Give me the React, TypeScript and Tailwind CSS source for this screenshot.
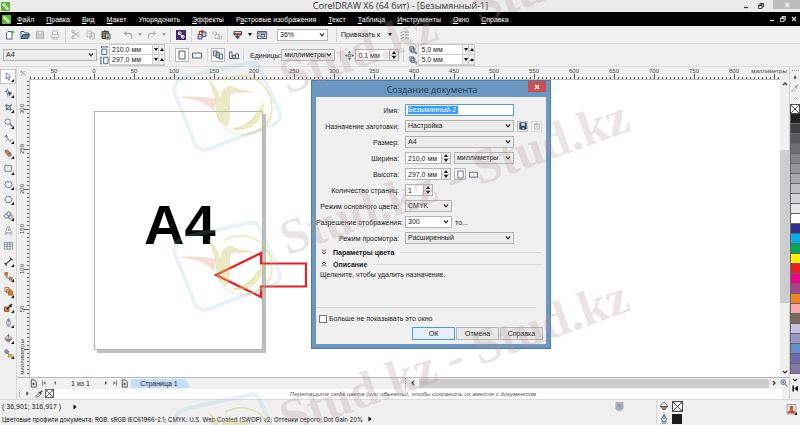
import type { ReactNode } from "react";

type IconProps = { children: ReactNode; box?: string; className?: string; color?: string };

function Icon({ children, box = "0 0 20 20", className = "size-[10px]", color = "#44546a" }: IconProps) {
  return (
    <svg viewBox={box} className={`shrink-0 ${className}`} fill="none" stroke={color} strokeWidth="1.8" aria-hidden="true">
      {children}
    </svg>
  );
}

function Caret({ dim = false }: { dim?: boolean }) {
  return (
    <svg viewBox="0 0 4 3" className="h-[3px] w-1 shrink-0" aria-hidden="true">
      <path d="M0 0h4L2 3z" fill={dim ? "#aaa" : "#111"} />
    </svg>
  );
}

function Separator() {
  return <div className="h-[14px] w-px shrink-0 bg-[#d4d4d4]" />;
}

/* ---------- shared form controls ---------- */

function Select({ id, value, label, className, white = false }: { id: string; value: string; label?: string; className: string; white?: boolean }) {
  return (
    <div className={`relative shrink-0 ${className}`}>
      <select
        id={id}
        aria-label={label}
        defaultValue={value}
        className={`block h-3 w-full appearance-none border border-[#b4b4b4] pl-0.5 text-[7px] leading-[10px] outline-none ${white ? "bg-white" : "bg-[#ececec]"}`}
      >
        <option>{value}</option>
      </select>
      <svg viewBox="0 0 6 4" className="pointer-events-none absolute top-1 right-[3px] h-1 w-[6px]" aria-hidden="true">
        <path d="M1 .5l2 2.4L5 .5" fill="none" stroke="#333" strokeWidth="1.2" />
      </svg>
    </div>
  );
}

function StackedSpin() {
  return (
    <div className="flex w-[9px] shrink-0 flex-col border-y border-r border-[#b4b4b4] bg-[#ececec]">
      <button aria-label="Больше" className="flex flex-1 items-center justify-center border-b border-[#c4c4c4]">
        <svg viewBox="0 0 4 3" className="h-[3px] w-[4px]"><path d="M2 0l2 3H0z" fill="#111" /></svg>
      </button>
      <button aria-label="Меньше" className="flex flex-1 items-center justify-center">
        <svg viewBox="0 0 4 3" className="h-[3px] w-[4px]"><path d="M0 0h4L2 3z" fill="#111" /></svg>
      </button>
    </div>
  );
}

function Spinner({ id, value, label, className }: { id: string; value: string; label?: string; className: string }) {
  return (
    <div className={`flex h-3 shrink-0 ${className}`}>
      <input id={id} aria-label={label} defaultValue={value} className="min-w-0 flex-1 border border-[#b4b4b4] bg-white pl-0.5 text-[7px] outline-none" />
      <StackedSpin />
    </div>
  );
}

function FlatSpinner({ label, value, className }: { label: string; value: string; className: string }) {
  return (
    <div className={`flex h-[10px] border-b border-[#cfcfcf] bg-white ${className}`}>
      <input aria-label={label} defaultValue={value} className="min-w-0 flex-1 pl-0.5 text-[7px] outline-none" />
      <button aria-label="Меньше" className="flex w-[6px] items-center justify-center border-l border-[#cfcfcf] bg-[#eee]">
        <svg viewBox="0 0 4 3" className="h-[3px] w-[4px]"><path d="M0 0h4L2 3z" fill="#111" /></svg>
      </button>
      <button aria-label="Больше" className="flex w-[6px] items-center justify-center border-l border-[#cfcfcf] bg-[#eee]">
        <svg viewBox="0 0 4 3" className="h-[3px] w-[4px]"><path d="M2 0l2 3H0z" fill="#111" /></svg>
      </button>
    </div>
  );
}

/* ---------- window chrome ---------- */

function Logo() {
  return (
    <svg viewBox="0 0 20 20" className="size-[9px] shrink-0" aria-hidden="true">
      <path d="M0 0h20v20H0z" fill="#5cb531" />
      <path d="M3 4l4-1 9 9 1 5-5-1-9-9z" fill="#fff" />
      <path d="M4 5l10 9M6 4l9 9" stroke="#5cb531" strokeWidth="1" />
    </svg>
  );
}

function WindowButtons({ color }: { color: string }) {
  return (
    <>
      <button aria-label="Свернуть"><Icon className="size-[6px]" color={color} box="0 0 12 12"><path d="M2 9h8" strokeWidth="2.5" /></Icon></button>
      <button aria-label="Восстановить"><Icon className="size-[6px]" color={color} box="0 0 12 12"><path d="M1 4h7v7H1zM4 4V1h7v7H8M1 5h7M4 2h7" /></Icon></button>
    </>
  );
}

function TitleBar() {
  return (
    <header className="flex h-3 items-center bg-[#ebebeb] pl-px">
      <Logo />
      <h1 className="flex-1 pl-[48px] text-center font-['Open_Sans',sans-serif] text-[9px] leading-3 text-[#333]">CorelDRAW X6 (64 бит) - [Безымянный-1]</h1>
      <div className="flex h-full items-center gap-[9px]">
        <WindowButtons color="#333" />
        <button aria-label="Закрыть" className="flex h-[9px] w-[27px] items-center justify-center self-start bg-[#bcbcbc]">
          <Icon className="size-[6px]" color="#fff" box="0 0 12 12"><path d="M2 2l8 8M10 2l-8 8" strokeWidth="2.4" /></Icon>
        </button>
      </div>
    </header>
  );
}

const menus: [string, string, string][] = [
  ["", "Ф", "айл"],
  ["", "П", "равка"],
  ["", "В", "ид"],
  ["", "М", "акет"],
  ["Упоря", "д", "очить"],
  ["", "Э", "ффекты"],
  ["Р", "а", "стровые изображения"],
  ["", "Т", "екст"],
  ["", "Т", "аблица"],
  ["", "И", "нструменты"],
  ["", "О", "кно"],
  ["", "С", "правка"],
];

function MenuBar() {
  return (
    <nav className="flex h-[14px] items-center bg-black pr-[3px] pl-[2px] text-white">
      <Logo />
      <div className="flex flex-1 gap-3 pl-[6px]">
        {menus.map(([a, u, b]) => (
          <button key={a + u + b} className="whitespace-nowrap">{a}<u>{u}</u>{b}</button>
        ))}
      </div>
      <div className="flex items-center gap-[5px]">
        <WindowButtons color="#ddd" />
        <button aria-label="Закрыть документ"><Icon className="size-[6px]" color="#ddd" box="0 0 12 12"><path d="M2 2l8 8M10 2l-8 8" strokeWidth="2.4" /></Icon></button>
      </div>
    </nav>
  );
}

function Tool({ label, children, className = "" }: { label: string; children: ReactNode; className?: string }) {
  return <button aria-label={label} className={`flex shrink-0 items-center justify-center ${className}`}>{children}</button>;
}

function StandardBar() {
  return (
    <div className="flex h-[18px] items-center border-b border-[#dcdcdc] pl-[5px]">
      <div className="flex items-center gap-[5px]">
        <Tool label="Создать"><Icon><path d="M3 6l3-3h8v15H3z" fill="#fff" /><path d="M15 1v7M11 4h8" stroke="#53ab3c" strokeWidth="2.5" /></Icon></Tool>
        <Tool label="Открыть"><Icon color="#26405f"><path d="M2 17V3h6l2 3h7v3" /><path d="M2 17l4-8h13l-3 8z" fill="#5f7ea6" /></Icon></Tool>
        <Tool label="Сохранить"><Icon color="#b4b4b4"><path d="M3 3h14v14H3zM6 3v6h8V3M6 17v-5h8v5" strokeWidth="2.2" /></Icon></Tool>
        <Tool label="Печать"><Icon color="#b8b8b8"><path d="M5 9V2h10v7M2 9h16v6H2zM4 18h12" /></Icon></Tool>
      </div>
      <div className="flex items-center gap-[5px] pl-[5px]">
        <Separator />
        <Tool label="Вырезать"><Icon color="#a6a6a6"><path d="M2 4l15 9M2 13l15-9" /><circle cx="4" cy="3" r="2.5" /><circle cx="4" cy="15" r="2.5" /></Icon></Tool>
        <Tool label="Копировать"><Icon color="#b4b4b4"><path d="M2 2h9v12H2zM8 6h9v12H8zM10 10h5M10 14h5" /></Icon></Tool>
        <Tool label="Вставить"><Icon color="#3b3b3b"><path d="M2 3h13v14H2z" fill="#837d5e" /><path d="M9 8h9v10H9z" fill="#fff" /><path d="M6 2h5M11 12h5M11 15h5" strokeWidth="2.4" /></Icon></Tool>
      </div>
      <div className="flex items-center gap-[5px] pl-3">
        <Tool label="Отменить"><Icon color="#a9b0b8"><path d="M7 3L3 7l4 4M3 7h9q5 0 5 5v5" strokeWidth="2.6" /></Icon></Tool>
        <Caret dim />
        <Tool label="Повторить"><Icon color="#b9bec4"><path d="M13 3l4 4-4 4M17 7H8q-5 0-5 5v5" strokeWidth="2.6" /></Icon></Tool>
        <Caret dim />
      </div>
      <div className="flex items-center gap-[5px] pl-1">
        <Separator />
        <Tool label="Corel CONNECT"><Icon color="#fff"><path d="M0 0h20v20H0z" fill="#46246b" stroke="none" /><path d="M4 5l12 11M5 4h5v5H5zM11 11h5v5h-5z" /></Icon></Tool>
        <Separator />
        <Tool label="Импорт"><Icon><path d="M2 9h8v9H2zM10 4h8v9h-8z" fill="#b9c4d3" /><path d="M5 9V3h7M9 0l4 3-4 3" stroke="#bd2b20" strokeWidth="2.2" /></Icon></Tool>
        <Tool label="Экспорт"><Icon color="#b4b4b4"><path d="M2 9V4h7v5M6 9h8v8H6zM14 12h5v6h-5z" /></Icon></Tool>
        <Separator />
        <Tool label="Опубликовать"><Icon><path d="M2 3h15v7H2z" fill="#c9453a" /><path d="M4 5h11" stroke="#fff" /><path d="M9 10v4M5 13l4 5 4-5z" fill="#44546a" /></Icon></Tool>
        <Caret />
        <Tool label="Экран приветствия"><Icon><path d="M1 3h18v14H1z" fill="#d8deea" /><path d="M1 6h18M8 9h7v5H8zM4 9v5" /></Icon></Tool>
      </div>
      <div className="flex items-center gap-2 pl-[10px]">
        <Select id="zoom" label="Масштаб" value="36%" className="w-[51px]" white />
        <Separator />
        <button className="-ml-1 whitespace-nowrap">Привязать к</button>
        <Caret />
        <Tool label="Параметры"><Icon color="#7e8c82"><path d="M1 4l2 2 4-4M1 10l2 2 4-4M1 16l2 2 4-4" stroke="#5f9c68" /><path d="M10 4h8M10 10h8M10 16h8" /></Icon></Tool>
      </div>
    </div>
  );
}

function PropertyBar() {
  return (
    <div className="flex h-[23px] items-center border-b border-[#dcdcdc] pl-[3px]">
      <Select id="paper" label="Размер страницы" value="A4" className="w-[94px]" />
      <div className="flex flex-col gap-px pl-[3px]">
        <Icon className="size-[9px]"><path d="M4 7h11v12H4zM3 2h13M3 0v4M16 0v4" /></Icon>
        <Icon className="size-[9px]"><path d="M8 3h10v14H8zM2 3v14M0 3h4M0 17h4" /></Icon>
      </div>
      <div className="flex w-[56px] flex-col border border-[#c8c8c8]">
        <FlatSpinner label="Ширина страницы" value="210,0 мм" className="w-full" />
        <FlatSpinner label="Высота страницы" value="297,0 мм" className="w-full" />
      </div>
      <div className="flex items-center gap-[5px] pl-1">
        <Separator />
        <div className="flex items-center gap-[3px]">
          <Tool label="Книжная" className="size-[14px] border border-[#b9b9b9] bg-white"><Icon><path d="M4 2h12v16H4z" fill="#f2f4f8" /></Icon></Tool>
          <Tool label="Альбомная"><Icon><path d="M1 6h18v10H1z" fill="#f2f4f8" /></Icon></Tool>
        </div>
        <Separator />
        <div className="-ml-0.5 flex items-center gap-1">
          <Tool label="Все страницы" className="size-[14px] border border-[#b9b9b9] bg-white"><Icon><path d="M1 2h7v10H1zM6 5h7v10H6zM12 8h7v10h-7z" fill="#f2f4f8" /></Icon></Tool>
          <Tool label="Текущая страница"><Icon><path d="M1 4h5v13H1zM7 11h5v6H7zM13 8h6v9h-6z" fill="#f2f4f8" /></Icon></Tool>
        </div>
      </div>
      <div className="flex items-center gap-[6px] pl-1">
        <Separator />
        <label htmlFor="units">Единицы:</label>
      </div>
      <Select id="units" value="миллиметры" className="w-[54px]" />
      <div className="flex items-center gap-1 pl-[5px]">
        <Separator />
        <div className="flex items-center gap-px">
          <Icon className="size-[9px]"><path d="M7 7h6v6H7z" /><path d="M10 0l3 4H7zM10 20l3-4H7zM0 10l4-3v6zM20 10l-4-3v6z" fill="#333" stroke="none" /></Icon>
          <Spinner id="nudge" label="Шаг перемещения" value="0,1 мм" className="w-[44px]" />
        </div>
        <Separator />
      </div>
      <div className="flex flex-col gap-px pl-[5px]">
        <Icon className="size-[9px]"><path d="M2 2h8v9H2zM5 5h8v9H5z" fill="#dfe4ec" /><path d="M13 13l5 5M18 13l-5 5" /></Icon>
        <Icon className="size-[9px]"><path d="M2 2h8v9H2zM5 5h8v9H5z" fill="#dfe4ec" /><path d="M13 12l3 3 3-3M16 15v4" /></Icon>
      </div>
      <div className="flex w-[57px] flex-col border border-[#c8c8c8]">
        <FlatSpinner label="Смещение X" value="5,0 мм" className="w-full" />
        <FlatSpinner label="Смещение Y" value="5,0 мм" className="w-full" />
      </div>
    </div>
  );
}

/* ---------- tool box ---------- */

const tools: { name: string; flyout: boolean; art: ReactNode }[] = [
  { name: "Указатель", flyout: true, art: <path d="M6 2l9 9-5 .5 3 6-2.5 1-3-6L4 15z" fill="#fff" /> },
  { name: "Форма", flyout: true, art: <><path d="M8 1Q3 8 9 19M2 8l6-2" /><path d="M9 8l8 3-5 6z" fill="#26354a" /></> },
  { name: "Обрезка", flyout: true, art: <><path d="M6 2v12h13M2 6h12v12M18 2L4 16" strokeWidth="2.2" /></> },
  { name: "Масштаб", flyout: true, art: <><circle cx="8" cy="8" r="6" fill="#eef3f8" /><path d="M13 13l6 6" strokeWidth="3" /></> },
  { name: "Свободная форма", flyout: true, art: <path d="M5 1v8M1 5h8M5 15q4-8 6-2t4 2l4-4" /> },
  { name: "Интеллектуальная заливка", flyout: true, art: <><path d="M3 3l5-1 9 11-5 5L3 8z" fill="#d98547" /><path d="M2 2l4 4M8 13l7-5" stroke="#444" /></> },
  { name: "Прямоугольник", flyout: true, art: <path d="M2 3h15v13H2z" fill="#eef1f7" /> },
  { name: "Эллипс", flyout: true, art: <ellipse cx="10" cy="10" rx="8" ry="7" fill="#eef1f7" /> },
  { name: "Многоугольник", flyout: true, art: <path d="M6 3h8l4 7-4 7H6l-4-7z" fill="#eef1f7" /> },
  { name: "Основные фигуры", flyout: true, art: <><circle cx="6" cy="11" r="5" fill="#eef1f7" /><path d="M9 1l7 4-4 8-6-4zM11 9h7v8h-7z" fill="#eef1f7" /></> },
  { name: "Текст", flyout: false, art: <path d="M8 2h4l6 16h-5l-1-4H8l-1 4H2zM9 10h2l-1-4z" fill="#fff" strokeWidth="1.3" /> },
  { name: "Таблица", flyout: false, art: <path d="M1 3h18v15H1zM1 7h18M1 12h18M7 3v15M13 3v15" fill="#eef1f7" strokeWidth="1.3" /> },
  { name: "Размер", flyout: true, art: <path d="M3 17L17 4M1 13l5 6M13 2l6 5" stroke="#333" strokeWidth="2.4" /> },
  { name: "Соединительная линия", flyout: true, art: <><path d="M5 5v7l10 3" /><path d="M2 1h6v6H2zM12 12h6v6h-6z" fill="#d9823b" stroke="#a8622c" /></> },
  { name: "Перетекание", flyout: true, art: <><path d="M2 1h9v9H2z" fill="#f7ead2" stroke="#a8622c" /><path d="M6 5h9v8H6z" fill="#eeb469" stroke="#a8622c" /><path d="M10 9h9v9h-9z" fill="#e07d22" stroke="#a8622c" /></> },
  { name: "Пипетка", flyout: true, art: <><path d="M1 9h10v10H1z" fill="#dc7626" stroke="#8f4a17" /><path d="M6 14l8-8M12 4l5 5M14 6l4-4" stroke="#26354a" strokeWidth="3" /></> },
  { name: "Абрис", flyout: true, art: <path d="M10 1l5 9-2 5H7l-2-5zM10 3v7M6 18h8" fill="#eef1f7" /> },
  { name: "Заливка", flyout: true, art: <><path d="M2 10l8-8 8 8-8 8z" fill="#eef1f7" /><path d="M3 11h14l-7 7z" fill="#dc7626" /><path d="M10 9V0" /></> },
  { name: "Интерактивная заливка", flyout: true, art: <><path d="M1 6l5-5 5 5-5 5z" fill="#8a94a3" /><path d="M10 12h8v6h-8z" fill="#f0b04a" stroke="#c98a34" /><path d="M8 9l4 4" /></> },
];

function ToolBox() {
  return (
    <aside className="w-[17px] shrink-0 border-r border-[#d8d8d8] pt-0.5">
      <div className="flex h-[292px] flex-col">
        {tools.map((t, i) => (
          <button key={t.name} aria-label={t.name} className={`relative flex flex-1 items-center pl-[3px] ${i === 0 ? "border border-[#c4c4c4] bg-white" : "border border-transparent"}`}>
            <Icon className="size-[9px]" color="#5d6b80">{t.art}</Icon>
            {t.flyout && (
              <svg viewBox="0 0 3 3" className="absolute right-px bottom-px size-[3px]"><path d="M3 0v3H0z" fill="#000" /></svg>
            )}
          </button>
        ))}
      </div>
    </aside>
  );
}

/* ---------- rulers ---------- */

const topLabels = ["50", "0", "50", "100", "150", "200", "250", "300", "350", "400", "450", "500", "550", "600", "650", "700", "750", "800"];

function TopRuler() {
  return (
    <div className="flex h-3">
      <div className="flex w-3 shrink-0 items-center justify-center">
        <Icon className="size-[7px]" color="#666"><path d="M5 0v20M0 5h20" strokeDasharray="2 2" /><path d="M5 5l11 11" /></Icon>
      </div>
      <svg className="h-3 min-w-0 flex-1" role="img" aria-label="Горизонтальная линейка">
        <g stroke="#555" shapeRendering="crispEdges">
          {Array.from({ length: 188 }, (_, i) => (
            <line key={i} x1={i * 4 + 1.5} x2={i * 4 + 1.5} y1={i % 10 === 6 ? 7 : 10} y2="12" />
          ))}
        </g>
        <g fill="#444" className="text-[6px]" textAnchor="middle">
          {topLabels.map((t, i) => <text key={i} x={25 + i * 40} y="6">{t}</text>)}
          <text x="740" y="6">миллиметры</text>
        </g>
      </svg>
    </div>
  );
}

const sideLabels = ["300", "250", "200", "150", "100", "50"];

function SideRuler() {
  return (
    <svg className="h-full w-3 shrink-0" role="img" aria-label="Вертикальная линейка">
      <g stroke="#555" shapeRendering="crispEdges">
        {Array.from({ length: 76 }, (_, i) => (
          <line key={i} y1={i * 4 + 2.5} y2={i * 4 + 2.5} x1={i % 10 === 7 ? 7 : 10} x2="12" />
        ))}
      </g>
      <g fill="#444" className="text-[6px]" textAnchor="middle">
        {sideLabels.map((t, i) => <text key={t} transform={`translate(7 ${30 + i * 40}) rotate(-90)`}>{t}</text>)}
        <text transform="translate(7 278) rotate(-90)">миллиметры</text>
      </g>
    </svg>
  );
}

/* ---------- dialog ---------- */

function Row({ label, id, children }: { label: string; id: string; children: ReactNode }) {
  return (
    <div className="flex h-4 items-center gap-[6px]">
      <label htmlFor={id} className="w-[83px] text-right whitespace-nowrap">{label}</label>
      <div className="flex items-center gap-[3px]">{children}</div>
    </div>
  );
}

function Section({ title, open }: { title: string; open: boolean }) {
  return (
    <div className="flex h-3 items-center gap-[6px] pr-1 pl-[5px]">
      <Icon className="size-[6px]" color="#333" box="0 0 12 12">{open ? <path d="M2 6l4-4 4 4M2 11l4-4 4 4" /> : <path d="M2 1l4 4 4-4M2 6l4 4 4-4" />}</Icon>
      <button className="font-bold">{title}</button>
      <div className="h-px flex-1 bg-[#dadada]" />
    </div>
  );
}

function Dialog() {
  return (
    <section role="dialog" aria-labelledby="dlg" className="absolute top-0 left-[281px] w-[240px] border border-[#4d7ba8] bg-[#6b98c3] px-1 pb-1">
      <div className="flex h-4 items-center">
        <h2 id="dlg" className="flex-1 pl-5 text-center font-['Open_Sans',sans-serif] text-[9px] text-[#26384c]">Создание документа</h2>
        <button aria-label="Закрыть диалог" className="flex h-[11px] w-[18px] items-center justify-center self-start bg-[#c8504f]">
          <Icon className="size-[6px]" color="#fff" box="0 0 12 12"><path d="M2 2l8 8M10 2l-8 8" strokeWidth="2.4" /></Icon>
        </button>
      </div>
      <div className="bg-[#f0f0f0] pt-[5px] pb-1">
        <Row id="name" label="Имя:">
          <div className="flex h-3 w-[109px] items-center border border-[#569de5] bg-white pl-0.5">
            <input id="name" defaultValue="Безымянный-2" className="h-2 w-[50px] bg-[#3399ff] text-[7px] leading-[8px] text-white outline-none" />
          </div>
        </Row>
        <Row id="preset" label="Назначение заготовки:">
          <Select id="preset" value="Настройка" className="w-[109px]" />
          <Tool label="Сохранить заготовку" className="size-[11px] border border-[#c4c4c4]"><Icon className="size-[8px]" color="#26354a"><path d="M2 2h16v16H2z" fill="#3b5680" /><path d="M6 3h8v6H6z" fill="#fff" stroke="none" /><path d="M7 18v-5h7v5" fill="#aebbd0" /></Icon></Tool>
          <Tool label="Удалить заготовку" className="size-[11px] border border-[#dedede]"><Icon className="size-[8px]" color="#b4b4b4"><path d="M4 6h12v12H4zM2 5h16M8 2h4M8 8v8M12 8v8" /></Icon></Tool>
        </Row>
        <Row id="size" label="Размер:"><Select id="size" value="A4" className="w-[109px]" /></Row>
        <Row id="w" label="Ширина:">
          <Spinner id="w" value="210,0 мм" className="w-[46px]" />
          <Select id="wu" label="Единицы ширины" value="миллиметры" className="w-[60px]" />
        </Row>
        <Row id="h" label="Высота:">
          <Spinner id="h" value="297,0 мм" className="w-[46px]" />
          <Tool label="Книжная ориентация" className="size-[12px] border border-[#b9b9b9] bg-white"><Icon className="size-[9px]"><path d="M4 2h12v16H4z" /></Icon></Tool>
          <Tool label="Альбомная ориентация"><Icon className="size-[9px]"><path d="M1 5h18v11H1z" /></Icon></Tool>
        </Row>
        <Row id="pages" label="Количество страниц:"><Spinner id="pages" value="1" className="w-[28px]" /></Row>
        <Row id="mode" label="Режим основного цвета:"><Select id="mode" value="CMYK" className="w-[47px]" /></Row>
        <Row id="dpi" label="Разрешение отображения:">
          <Select id="dpi" value="300" className="w-[47px]" white />
          <span>то...</span>
        </Row>
        <Row id="view" label="Режим просмотра:"><Select id="view" value="Расширенный" className="w-[109px]" /></Row>
        <Section title="Параметры цвета" open={false} />
        <Section title="Описание" open />
        <p className="h-[37px] pl-1">Щелкните, чтобы удалить назначение.</p>
        <hr className="mr-[10px] ml-px border-[#d6d6d6]" />
        <label className="mt-[6px] ml-[3px] flex h-[9px] items-center gap-0.5">
          <input type="checkbox" className="size-2 appearance-none border border-[#777] bg-white" />
          Больше не показывать это окно
        </label>
        <div className="mt-1 flex justify-end gap-px pr-[3px]">
          <button className="h-[13px] w-[43px] border border-[#4a9be0] bg-[#e6eef6]">ОК</button>
          <button className="h-[13px] w-[43px] border border-[#b4b4b4] bg-[#e8e8e8]">Отмена</button>
          <button className="h-[13px] w-[43px] border border-[#b4b4b4] bg-[#e8e8e8]">Справка</button>
        </div>
      </div>
    </section>
  );
}

/* ---------- drawing area ---------- */

function Canvas() {
  return (
    <main className="relative min-w-0 flex-1 overflow-hidden border-t border-l border-[#bdbdbd] bg-white">
      <div className="absolute top-[31px] left-[64px] h-[239px] w-[169px] border border-[#b5b5b5] bg-white shadow-[3px_3px_0_#bfbfbf]">
        <p className="pt-[81px] pl-[49px] text-[56px] leading-[64px] font-bold text-black">A4</p>
      </div>
      <svg viewBox="0 0 94 50" className="absolute top-[170px] left-[183px] h-[50px] w-[94px]" aria-hidden="true">
        <path d="M3 25L48 3v10.500h45v23H48V47z" fill="none" stroke="#ea1c24" strokeWidth="2.200" />
      </svg>
      <Dialog />
    </main>
  );
}

function Chevron({ d, label, className = "" }: { d: string; label: string; className?: string }) {
  return (
    <button aria-label={label} className={`flex shrink-0 items-center justify-center ${className}`}>
      <Icon className="size-[6px]" color="#333" box="0 0 12 12"><path d={d} strokeWidth="2.4" /></Icon>
    </button>
  );
}

function VerticalScroll() {
  return (
    <div className="flex w-[9px] shrink-0 flex-col bg-[#f0f0f0]">
      <Chevron label="Вверх" d="M2 8l4-4 4 4" className="h-[10px]" />
      <div className="h-[61px]" />
      <div className="h-[153px] bg-[#cdcdcd]" />
      <div className="flex-1" />
      <Chevron label="Вниз" d="M2 4l4 4 4-4" className="h-[10px]" />
    </div>
  );
}

function PageNav() {
  const page = <path d="M5 2h7l4 4v12H5zM7 11h6M10 8v6" />;
  return (
    <div className="flex h-[11px] items-center border-t border-[#b8b8b8] pl-3">
      <div className="flex items-center">
        <Tool label="Добавить страницу в начало"><Icon color="#333" className="size-[9px]">{page}</Icon></Tool>
        <Tool label="Первая" className="w-3"><Icon className="size-[6px]" box="0 0 12 12" color="#666"><path d="M3 1v10" /><path d="M9 2v8L5 6z" fill="#666" stroke="none" /></Icon></Tool>
        <Tool label="Предыдущая" className="w-[10px]"><Icon className="size-[6px]" box="0 0 12 12"><path d="M8 2v8L4 6z" fill="#666" stroke="none" /></Icon></Tool>
        <span className="w-[41px] text-center text-[7px]">1 из 1</span>
        <Tool label="Следующая" className="w-[9px]"><Icon className="size-[6px]" box="0 0 12 12"><path d="M4 2v8l4-4z" fill="#444" stroke="none" /></Icon></Tool>
        <Tool label="Последняя" className="w-[10px]"><Icon className="size-[6px]" box="0 0 12 12" color="#666"><path d="M9 1v10" /><path d="M3 2v8l4-4z" fill="#666" stroke="none" /></Icon></Tool>
        <Tool label="Добавить страницу в конец"><Icon color="#333" className="size-[9px]">{page}</Icon></Tool>
      </div>
      <button className="ml-0.5 h-[9px] w-[58px] rounded-tr-[7px] bg-[#c5def8] pr-[2px] text-[7px] leading-[9px]">Страница 1</button>
      <div className="ml-[216px] h-[10px] border-l border-dotted border-[#999]" />
      <Chevron label="Влево" d="M8 2L4 6l4 4" className="w-[13px]" />
      <div className="h-[9px] flex-1 bg-[#cdcdcd]" />
      <Chevron label="Вправо" d="M4 2l4 4-4 4" className="w-[10px]" />
      <Tool label="Навигатор" className="w-[10px]"><Icon className="size-[8px]"><circle cx="8" cy="8" r="6" fill="#dfe6ef" /><path d="M12 12l7 7M5 8h6M8 5v6" /></Icon></Tool>
    </div>
  );
}

function NoColor({ className }: { className: string }) {
  return (
    <svg viewBox="0 0 20 20" className={`shrink-0 ${className}`} aria-hidden="true">
      <path d="M1 1h18v18H1zM1 1l18 18M19 1L1 19" fill="#fff" stroke="#222" strokeWidth="1.6" />
    </svg>
  );
}

function Eyedropper({ color }: { color: string }) {
  return <Icon className="size-2" color={color}><path d="M2 18l2-5 7-7 4 4-7 7z" /><path d="M10 5l5 5M13 7l5-5" strokeWidth="4" /></Icon>;
}

function DocumentPalette() {
  return (
    <div className="flex h-[11px] items-center">
      <div className="ml-0.5 h-[7px] w-px border-l border-dotted border-[#999]" />
      <button aria-label="Меню палитры" className="flex w-[15px] justify-center"><Icon className="size-[5px]" box="0 0 10 10"><path d="M3 1v8l4-4z" fill="#000" stroke="none" /></Icon></button>
      <button aria-label="Образец" className="mr-0.5"><Eyedropper color="#33415a" /></button>
      <NoColor className="size-[9px]" />
      <div className="h-[10px] flex-1 bg-white pr-[10px] text-center text-[6px] leading-[10px] text-[#555] italic">
        Перетащите сюда цвета (или объекты), чтобы сохранить их вместе с документом
      </div>
      <div className="w-[7px]" />
    </div>
  );
}

const swatches = [
  "#232323", "#414042", "#58595b", "#6d6e71", "#808285", "#939598", "#a7a9ac", "#bcbec0", "#d1d3d4", "#e6e7e8", "#ffffff", "#2e3192", "#00aeef",
  "#00a651", "#fff200", "#ed1c24", "#ec008c", "#a3478a", "#f58220", "#f8a8ab", "#7d6a5f", "#c5c3e0", "#9a94c8", "#6590cb", "#6f6bb0", "#8278a9",
];

function ColorPalette() {
  return (
    <aside className="flex w-[11px] shrink-0 flex-col items-center border-l border-[#d0d0d0] pt-[3px]">
      <div className="h-px w-[7px] border-t border-dotted border-[#999]" />
      <button aria-label="Меню цветов" className="flex h-3 items-center"><Icon className="size-[5px]" box="0 0 10 10"><path d="M3 1v8l4-4z" fill="#000" stroke="none" /></Icon></button>
      <button aria-label="Пипетка цвета" className="flex h-[10px] items-center"><Eyedropper color="#aaa" /></button>
      <button aria-label="Цвета вверх" className="flex h-[11px] items-center"><Icon className="size-[5px]" color="#999" box="0 0 10 10"><path d="M1 7l4-4 4 4" /></Icon></button>
      <NoColor className="size-[10px]" />
      {swatches.map((c) => (
        <button key={c} aria-label={c} className="h-[10px] w-full border-b border-l border-[#666]" style={{ backgroundColor: c }} />
      ))}
      <Chevron label="Цвета вниз" d="M2 4l4 4 4-4" className="h-[11px]" />
      <Tool label="Развернуть палитру"><Icon className="size-[7px]" box="0 0 12 12" color="#000"><path d="M2 1v10" strokeWidth="2.5" /><path d="M10 1v10L4 6z" fill="#000" stroke="none" /></Icon></Tool>
    </aside>
  );
}

function StatusBar() {
  return (
    <footer className="flex h-[26px] border-t border-[#dadada] pl-0.5 font-[Inter,'Noto_Sans',sans-serif] text-[6px] text-[#111]">
      <div className="flex flex-1 flex-col whitespace-nowrap">
        <div className="flex h-[13px] items-center gap-[11px] font-['Liberation_Sans',sans-serif] text-[7px]">( 36,901; 316,917 ) <Icon className="size-[6px]" box="0 0 12 12"><path d="M3 1v10l6-5z" fill="#000" stroke="none" /></Icon></div>
        <div className="flex h-3 items-center gap-1">
          Цветовые профили документа: RGB: sRGB IEC61966-2.1; CMYK: U.S. Web Coated (SWOP) v2; Оттенки серого: Dot Gain 20%
          <Icon className="size-[6px]" box="0 0 12 12"><path d="M3 1v10l6-5z" fill="#000" stroke="none" /></Icon>
        </div>
      </div>
      <div className="flex gap-[32px] pt-px">
        <svg viewBox="0 0 20 20" className="mt-px size-[9px]" aria-hidden="true">
          <path d="M2 1h16v14l-4 4H6l-4-4z" fill="#aeb3c4" stroke="#85899a" /><circle cx="8" cy="8" r="4" fill="#c4817f" opacity=".6" /><circle cx="12" cy="8" r="4" fill="#7f9dc4" opacity=".6" /><circle cx="10" cy="12" r="4" fill="#7db190" opacity=".6" />
        </svg>
        <div className="mr-[103px] grid grid-cols-[10px_11px] gap-x-[3px] gap-y-px border-l border-[#d4d4d4] pl-0.5">
          <Icon className="size-[10px]"><path d="M2 10l8-8 8 8-8 8z" fill="#fff" /><path d="M3 11h14l-7 7z" fill="#dc7626" /></Icon>
          <NoColor className="size-[11px]" />
          <Icon className="size-[10px]"><path d="M10 1l5 9-2 5H7l-2-5zM10 3v7M6 18h8" fill="#eef1f7" /></Icon>
          <div className="size-[10px] bg-[#1d1d1d]" />
        </div>
      </div>
      <div className="flex w-[14px] items-start pt-1">
        <Icon className="size-[11px]" color="#999"><path d="M2 1h16v17H2z" fill="#f4f4f4" /><path d="M10 3a3.500 3.500 0 013 5l-1 3 5 3v3H3v-3l5-3-1-3a3.500 3.500 0 013-5z" fill="#d3472c" stroke="none" /><path d="M20 15v5h-5z" fill="#000" stroke="none" /></Icon>
      </div>
    </footer>
  );
}

/* ---------- translucent site marks over the window ---------- */

function Hummingbird() {
  return (
    <svg viewBox="0 0 130 105" className="h-[105px] w-[130px]" fill="none" aria-hidden="true">
      <path d="M24 21L84 8q8-2 11 6l19 42q3 10-6 14L43 94q-10 3-14-7L10 39Q7 25 24 21z" stroke="#8fbfca" strokeOpacity=".2" strokeWidth="4" />
      <path d="M60 25q20-10 36 3 14 14 10 32-6 16-24 19" stroke="#c3d35a" strokeOpacity=".45" strokeWidth="1.500" />
      <path d="M52 60q5 19 26 20 20 0 29-18" stroke="#e89a9a" strokeOpacity=".35" />
      <path d="M96 50q-2 20-28 24 26 2 31-26M93 56q-6 12-18 17" stroke="#cfcb55" strokeOpacity=".5" strokeWidth="1.500" />
      <path d="M43 24q10 8 12 19 2-12 11-12 5 3 25 6-15 1-24 1-3 5-2 9 1 15-3 25-12-7-11-19-1-14-8-29z" fill="#cfc76f" fillOpacity=".4" />
      <path d="M12 42q20-2 39 2l-2 13q-8-12-37-15z" fill="#e99a8c" fillOpacity=".35" />
    </svg>
  );
}

function Watermarks() {
  return (
    <div className="pointer-events-none absolute inset-0 overflow-hidden" aria-hidden="true">
      {["top-[55px]", "top-[215px]", "top-[387px]"].map((top) => (
        <div key={top} className={`absolute left-[165px] ${top}`}><Hummingbird /></div>
      ))}
      {["top-[53px]", "top-[214px]", "top-[394px]"].map((top) => (
        <div key={top} className={`absolute left-[290px] ${top} origin-bottom-left -rotate-[20deg] font-['Liberation_Serif',serif] text-[50px] leading-[48px] font-bold whitespace-nowrap text-[#b09595]/25`}>
          Stud.kz - Stud.kz
        </div>
      ))}
    </div>
  );
}

export default function App() {
  return (
    <div className="relative flex h-screen flex-col overflow-hidden bg-[#f0f0f0] font-['Liberation_Sans',Arial,sans-serif] text-[7px] leading-[9px] text-[#1a1a1a]">
      <TitleBar />
      <MenuBar />
      <StandardBar />
      <PropertyBar />
      <div className="flex min-h-0 flex-1">
        <ToolBox />
        <div className="flex min-w-0 flex-1 flex-col">
          <TopRuler />
          <div className="flex min-h-0 flex-1">
            <SideRuler />
            <Canvas />
            <VerticalScroll />
          </div>
          <PageNav />
          <DocumentPalette />
        </div>
        <ColorPalette />
      </div>
      <StatusBar />
      <Watermarks />
    </div>
  );
}
